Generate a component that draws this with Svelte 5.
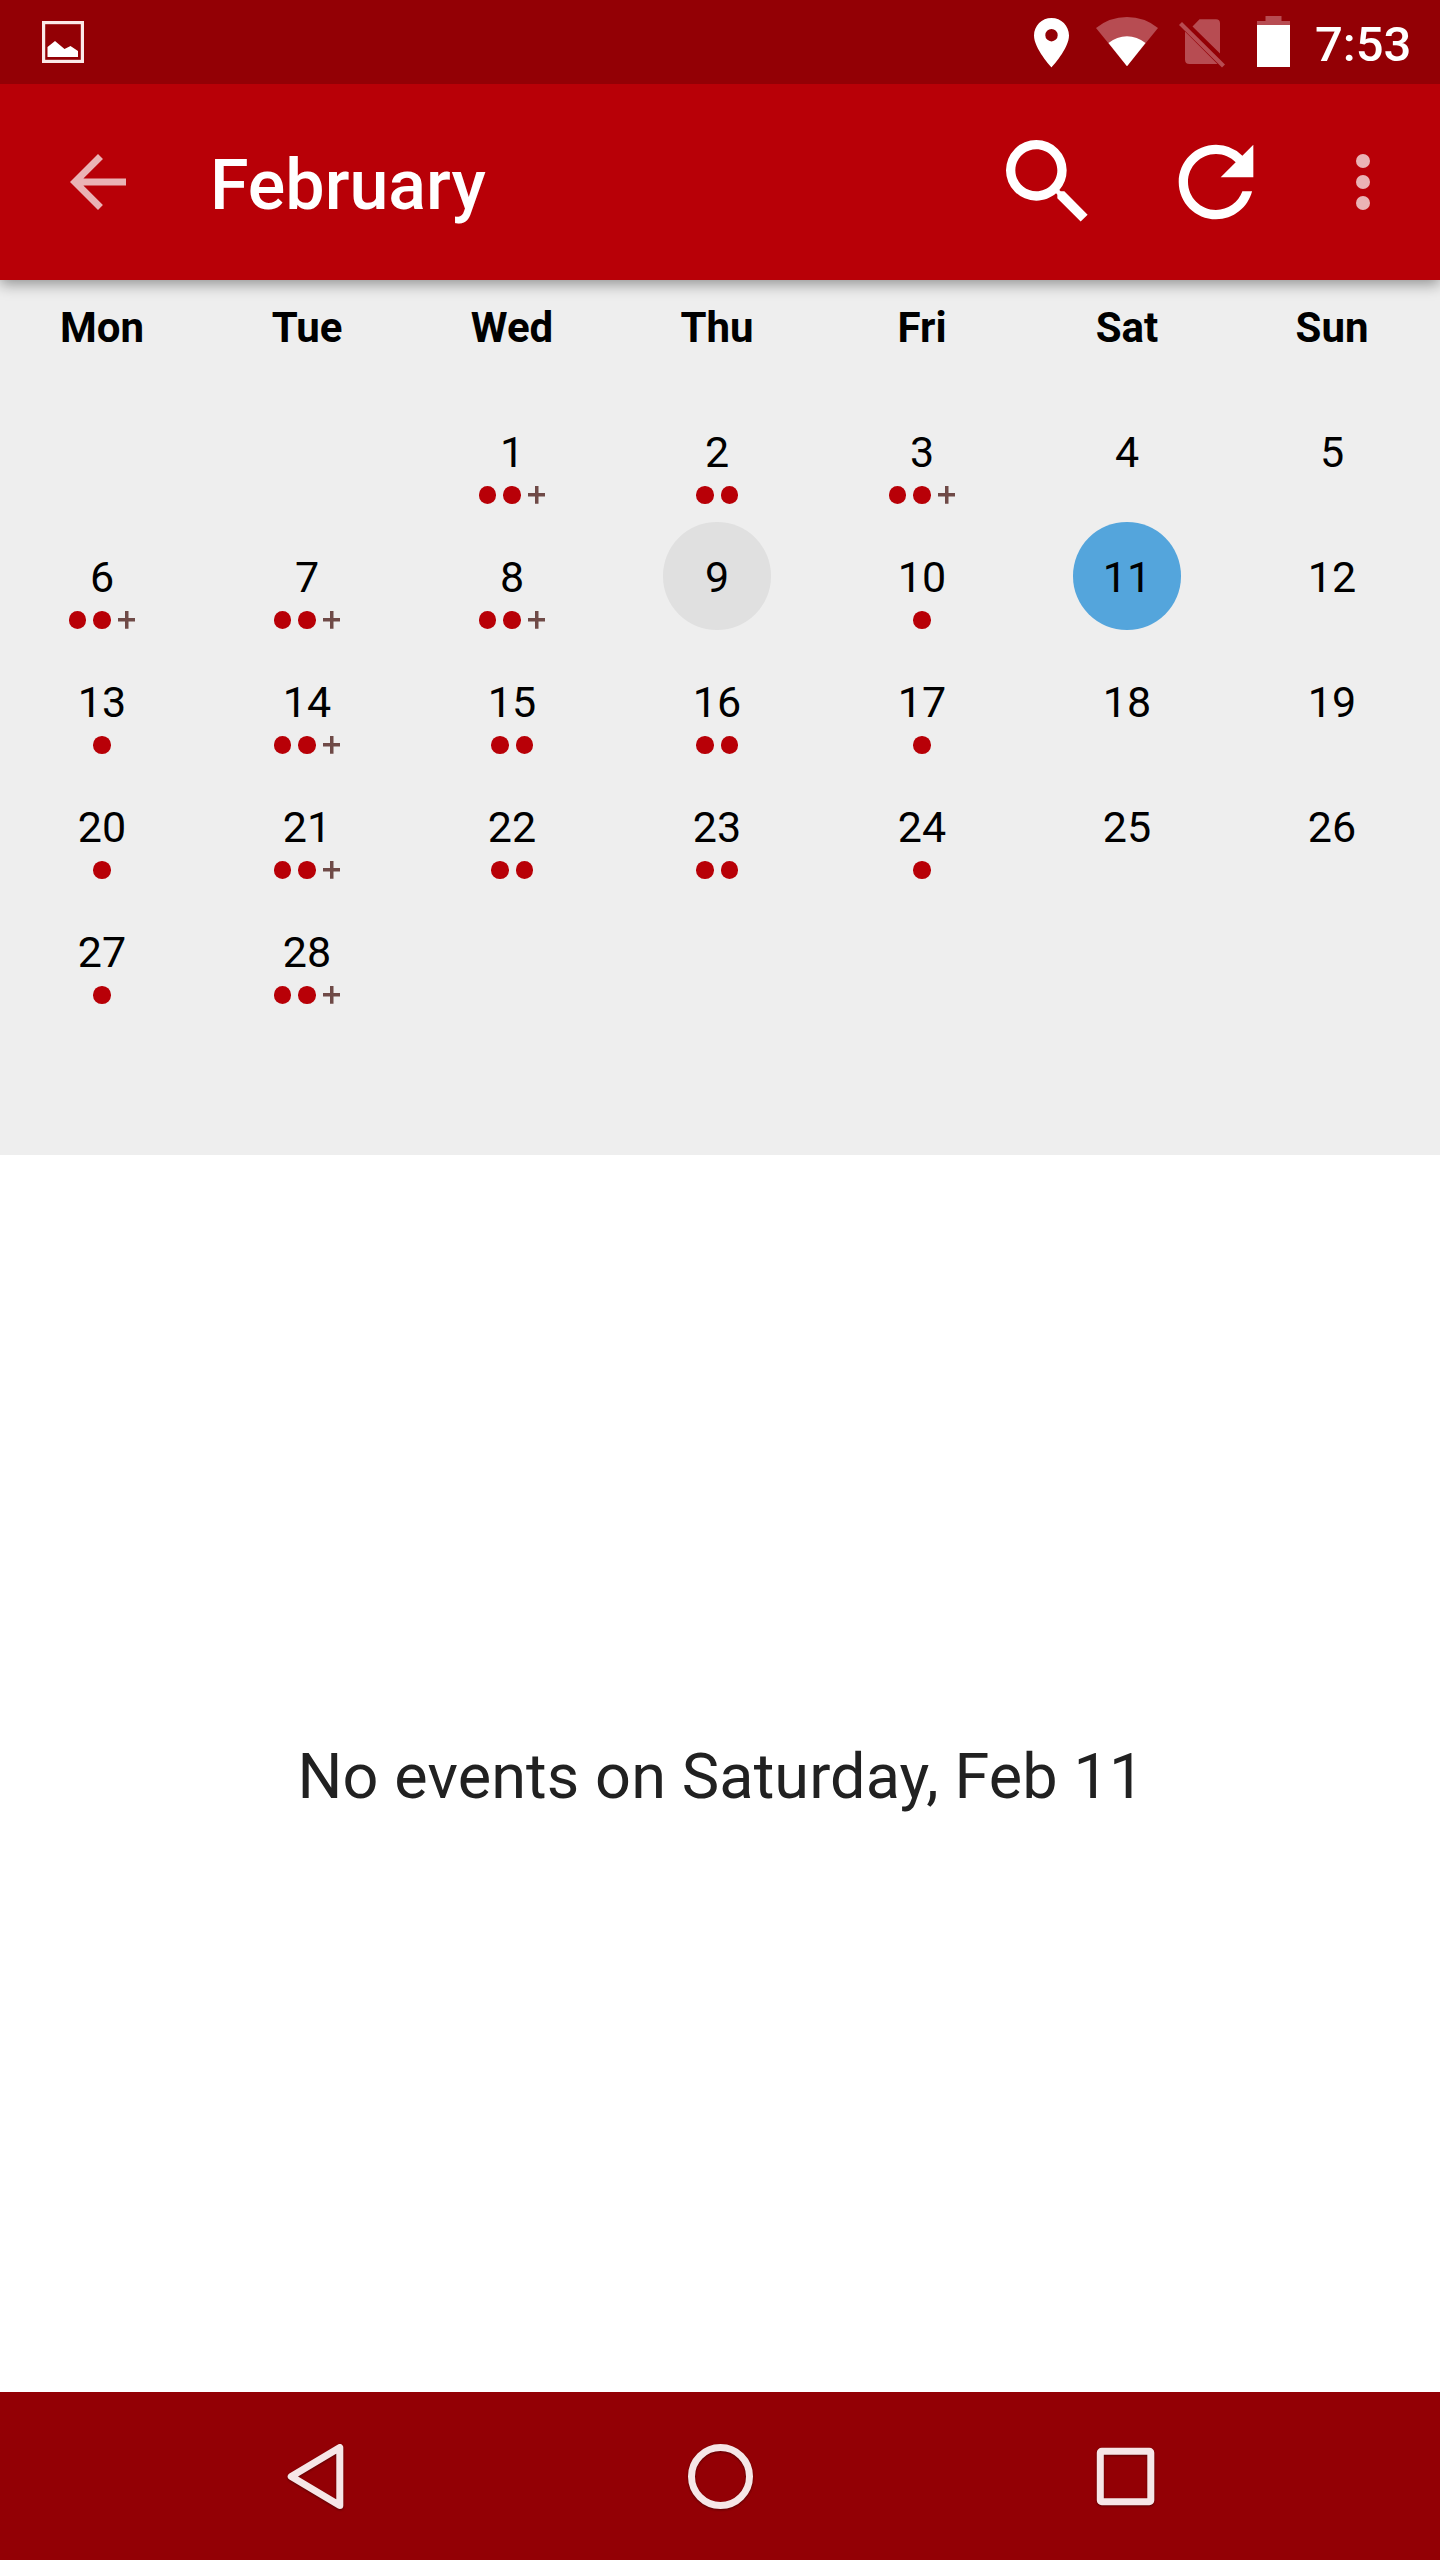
<script lang="ts">
  const weekdays = ["Mon", "Tue", "Wed", "Thu", "Fri", "Sat", "Sun"]

  // events per day, starting on the 1st
  const events = [3, 2, 3, 0, 0, 3, 3, 3, 0, 1, 0, 0, 1, 3, 2, 2, 1, 0, 0, 1, 3, 2, 2, 1, 0, 0, 1, 3]
  const offset = 2
  const today = 9

  let selected = $state(11)

  const days = [
    ...Array(offset).fill(null),
    ...events.map((count, i) => ({ day: i + 1, count })),
  ]
</script>

<div class="screen">
  <div class="status">
    <svg class="picture" width="42" height="42" viewBox="0 0 42 42">
      <rect x="1.6" y="1.6" width="38.8" height="38.8" fill="none" stroke="#fbe9e9" stroke-width="3.2" />
      <path d="M5.5 26 13 20 22.5 28 28.5 25 36 30V36H5.5z" fill="#fff" />
    </svg>
    <div class="tray">
      <svg width="70" height="84" viewBox="1016 0 70 84">
        <path fill="#fff" fill-rule="evenodd" d="M1051.500 18c-9.700 0-17.500 7.800-17.500 17.400C1034 48.500 1051.500 67.300 1051.500 67.300S1069 48.500 1069 35.400C1069 25.800 1061.200 18 1051.500 18zm0 23.400a6.200 6.200 0 1 1 0-12.400 6.200 6.200 0 0 1 0 12.400z" />
      </svg>
      <svg width="82" height="84" viewBox="1086 0 82 84">
        <path fill="#b74c52" d="M1127 66.200 1096 28Q1109.500 17 1127 17T1158 28z" />
        <path fill="#fff" d="M1127 66.200 1108.500 43Q1117 36.200 1127 36.200T1145.500 43z" />
      </svg>
      <svg width="72" height="84" viewBox="1168 0 72 84">
        <path fill="#b74c52" d="M1192.500 26.500 1199.500 19.300H1216Q1220 19.300 1220 23.300V53.500zM1185 31.500 1217.500 64H1189.500Q1185 64 1185 59.500z" />
        <path stroke="#b74c52" stroke-width="4.200" d="M1180.500 23.500 1223.500 66" />
      </svg>
      <svg width="74" height="84" viewBox="1240 0 74 84">
        <path fill="#b74c52" d="M1257 25V21H1265.500V16H1281.500V21H1290V25z" />
        <path fill="#fff" d="M1257 25H1290V67H1257z" />
      </svg>
      <span class="time">7:53</span>
    </div>
  </div>

  <header>
    <button class="back" aria-label="Back">
      <svg width="84" height="84" viewBox="0 0 24 24"><path d="M20 11H7.830l5.590-5.590L12 4l-8 8 8 8 1.410-1.410L7.830 13H20z" /></svg>
    </button>
    <h1>February</h1>
    <button class="action" aria-label="Search">
      <svg width="112" height="112" viewBox="0 0 24 24"><path d="M15.500 14h-.79l-.28-.27A6.471 6.471 0 0 0 16 9.500 6.500 6.500 0 1 0 9.500 16c1.610 0 3.090-.59 4.230-1.570l.27.28v.79l5 4.990L20.490 19zm-6 0C7.010 14 5 11.990 5 9.500S7.010 5 9.500 5 14 7.010 14 9.500 11.990 14 9.500 14z" /></svg>
    </button>
    <button class="action" aria-label="Refresh">
      <svg width="112" height="112" viewBox="0 0 24 24"><path d="M17.650 6.350A7.958 7.958 0 0 0 12 4c-4.420 0-7.990 3.580-7.990 8s3.570 8 7.990 8c3.730 0 6.840-2.550 7.730-6h-2.080A5.990 5.990 0 0 1 12 18c-3.310 0-6-2.690-6-6s2.690-6 6-6c1.660 0 3.140.69 4.220 1.780L13 11h7V4z" /></svg>
    </button>
    <button class="more" aria-label="More">
      <svg width="84" height="84" viewBox="0 0 24 24">
        <circle cx="12" cy="6" r="2" /><circle cx="12" cy="12" r="2" /><circle cx="12" cy="18" r="2" />
      </svg>
    </button>
  </header>

  <div class="calendar">
    <div class="week names">
      {#each weekdays as name}
        <div>{name}</div>
      {/each}
    </div>
    <div class="week">
      {#each days as d}
        {#if d}
          <button class="day" onclick={() => (selected = d.day)}>
            <span class="num" class:today={d.day === today} class:selected={d.day === selected}>{d.day}</span>
            <span class="dots">
              {#each Array(Math.min(d.count, 2)) as _}
                <i class="dot"></i>
              {/each}
              {#if d.count > 2}
                <i class="plus"></i>
              {/if}
            </span>
          </button>
        {:else}
          <div class="day"></div>
        {/if}
      {/each}
    </div>
  </div>

  <main>No events on Saturday, Feb {selected}</main>

  <nav>
    <svg width="90" height="90" viewBox="0 0 90 90">
      <path d="M69.800 16.500V74.500L21.200 45.500z" />
    </svg>
    <svg width="90" height="90" viewBox="0 0 90 90">
      <circle cx="45.500" cy="45.500" r="29" />
    </svg>
    <svg width="90" height="90" viewBox="0 0 90 90">
      <rect x="20.300" y="20.200" width="50.500" height="50.500" rx="1.500" />
    </svg>
  </nav>
</div>

<style>
  :global(body) {
    margin: 0;
  }
  .screen {
    width: 1440px;
    height: 2560px;
    display: flex;
    flex-direction: column;
    background: #fff;
    font-family: Roboto, sans-serif;
  }
  button {
    border: 0;
    padding: 0;
    background: none;
    font: inherit;
    color: inherit;
  }
  svg {
    display: block;
    flex: none;
  }

  .status {
    height: 84px;
    display: flex;
    align-items: center;
    justify-content: space-between;
    padding: 0 29px 0 42px;
    background: #930005;
  }
  .tray {
    display: flex;
    align-items: center;
  }
  .time {
    width: 96px;
    padding: 6px 0 0 1px;
    color: #fff;
    font-size: 49px;
    line-height: 84px;
    font-weight: 500;
  }

  header {
    height: 196px;
    display: flex;
    align-items: center;
    background: #b80007;
    box-shadow: 0 4px 14px rgba(0, 0, 0, 0.4);
    clip-path: inset(0 0 -30px 0);
    z-index: 1;
  }
  header svg {
    fill: #fff;
  }
  .back {
    width: 210px;
    padding-left: 56px;
  }
  .back svg,
  .more svg {
    fill: #eab3b5;
  }
  h1 {
    flex: 1;
    margin: 0;
    color: #fff;
    font-size: 70px;
    font-weight: 500;
    line-height: 84px;
    padding-top: 6px;
  }
  .action {
    width: 168px;
    padding-left: 28px;
  }
  .more {
    width: 140px;
    padding-left: 21px;
  }

  .calendar {
    height: 875px;
    background: #eee;
    color: #000;
    font-size: 43px;
  }
  .week {
    display: grid;
    grid-template-columns: repeat(7, 205px);
    grid-auto-rows: 125px;
    margin-left: -0.5px;
    text-align: center;
  }
  .names {
    height: 117px;
    font-size: 42px;
    font-weight: 700;
    line-height: 96px;
  }
  .day {
    display: flex;
    flex-direction: column;
    align-items: center;
  }
  .num {
    width: 107.5px;
    height: 107.5px;
    border-radius: 50%;
    line-height: 110px;
    flex: none;
  }
  .today {
    background: #e0e0e0;
  }
  .selected {
    background: #54a5dc;
  }
  .dots {
    display: flex;
    gap: 7px;
    margin-top: -18.5px;
    height: 17.5px;
  }
  .dot {
    width: 17.5px;
    height: 17.5px;
    border-radius: 50%;
    background: #b80007;
  }
  .plus {
    width: 17.5px;
    height: 17.5px;
    background:
      linear-gradient(#6f4a47, #6f4a47) center / 100% 3.5px no-repeat,
      linear-gradient(#6f4a47, #6f4a47) center / 3.5px 100% no-repeat;
  }

  main {
    flex: 1;
    display: flex;
    align-items: center;
    justify-content: center;
    padding: 6px 0 0 2px;
    color: #212121;
    font-size: 63px;
    letter-spacing: 0.1px;
  }

  nav {
    height: 168px;
    display: flex;
    align-items: center;
    justify-content: center;
    gap: 315px;
    background: #930005;
  }
  nav svg {
    fill: none;
    stroke: #f6e6e7;
    stroke-width: 7px;
    stroke-linejoin: round;
    filter: drop-shadow(0 1px 1px rgba(0, 0, 0, 0.4));
  }
</style>
